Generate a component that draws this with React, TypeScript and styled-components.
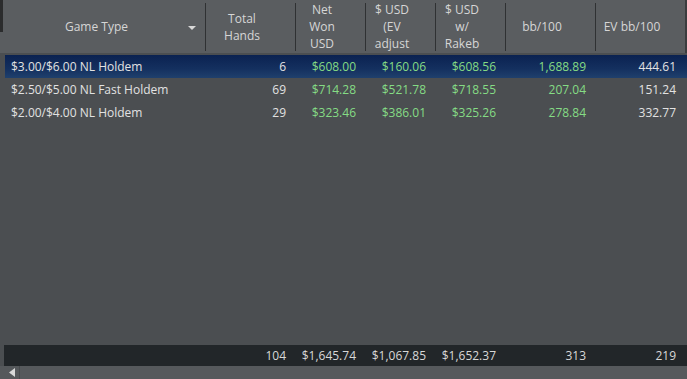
import * as React from "react";
import styled, { createGlobalStyle } from "styled-components";

const GlobalStyle = createGlobalStyle`
	html, body {
		margin: 0;
		padding: 0;
		background: #4b4e51;
	}
	body {
		font-family: "Open Sans", "Noto Sans", sans-serif;
		font-size: 12px;
	}
`;

const COLS = "5px 201px 90px 70px 70px 70px 90px 90px";

interface Stat {
	game: string;
	hands: string;
	net: string;
	ev: string;
	rake: string;
	bb: string;
	evbb: string;
}

const rows: Stat[] = [
	{ game: "$3.00/$6.00 NL Holdem", hands: "6", net: "$608.00", ev: "$160.06", rake: "$608.56", bb: "1,688.89", evbb: "444.61" },
	{ game: "$2.50/$5.00 NL Fast Holdem", hands: "69", net: "$714.28", ev: "$521.78", rake: "$718.55", bb: "207.04", evbb: "151.24" },
	{ game: "$2.00/$4.00 NL Holdem", hands: "29", net: "$323.46", ev: "$386.01", rake: "$325.26", bb: "278.84", evbb: "332.77" },
];

const headers = [
	["Game Type"],
	["Total", "Hands"],
	["Net", "Won", "USD"],
	["$ USD", "(EV", "adjust"],
	["$ USD", "w/", "Rakeb"],
	["bb/100"],
	["EV bb/100"],
];

const Frame = styled.div`
	width: 687px;
	height: 379px;
	display: flex;
	flex-direction: column;
	background: #4b4e51;
	overflow: hidden;
	color: #e2e2e2;
`;

const Header = styled.div`
	height: 53px;
	flex: none;
	display: grid;
	grid-template-columns: ${COLS} 1fr;
	background: #5a5d60;
	border-right: 2px solid #3a3c3e;
	box-sizing: border-box;
`;

const Gutter = styled.div`
	display: flex;
	align-items: flex-start;
`;

const GutterMark = styled.div`
	width: 3px;
	height: 32px;
	background: #2b2c2d;
`;

const HeadCell = styled.div<{ $last?: boolean }>`
	position: relative;
	display: flex;
	align-items: center;
	justify-content: center;
	padding-right: 18px;

	&::after {
		content: "";
		display: ${(p) => (p.$last ? "none" : "block")};
		position: absolute;
		right: 0;
		top: 3px;
		bottom: 2px;
		width: 1px;
		background: #2f3133;
	}
`;

const HeadText = styled.div`
	color: #d6d6d6;
	line-height: 17px;
	text-align: center;
	white-space: nowrap;
`;

const SortArrow = styled.div`
	position: absolute;
	right: 10px;
	top: 26px;
	width: 0;
	height: 0;
	border-left: 4px solid transparent;
	border-right: 4px solid transparent;
	border-top: 4px solid #d8d8d8;
`;

const Body = styled.div`
	flex: 1;
	padding-top: 2px;
	display: flex;
	flex-direction: column;
`;

const Row = styled.div<{ $selected?: boolean }>`
	height: 23px;
	display: grid;
	grid-template-columns: ${COLS};
	align-items: center;
	background: ${(p) =>
		p.$selected ? "linear-gradient(to bottom, #0b2251 0%, #14305f 60%, #1f406d 100%)" : "transparent"};
`;

const RowGap = styled.span`
	align-self: stretch;
	background: #4b4e51;
`;

const Cell = styled.div<{ $left?: boolean; $green?: boolean }>`
	padding: ${(p) => (p.$left ? "0 0 0 6px" : "0 10px 0 0")};
	text-align: ${(p) => (p.$left ? "left" : "right")};
	color: ${(p) => (p.$green ? "#85dc85" : "inherit")};
	white-space: nowrap;
	overflow: hidden;
`;

const Footer = styled.div`
	height: 21px;
	flex: none;
	display: grid;
	grid-template-columns: 4px 202px 90px 70px 70px 70px 90px 90px;
	align-items: center;
	background: #222629;
	color: #d8d8d8;
`;

const Scrollbar = styled.div`
	height: 13px;
	flex: none;
	display: flex;
	background: #55585b;
	padding-left: 4px;
`;

const ScrollButton = styled.div`
	width: 15px;
	display: flex;
	align-items: center;
	justify-content: center;
	border-right: 1px solid #484b4e;
`;

const ScrollTrack = styled.div`
	flex: 1;
	background: #56595c;
`;

export default function App(): JSX.Element {
	return (
		<Frame>
			<GlobalStyle />
			<Header>
				<Gutter>
					<GutterMark />
				</Gutter>
				{headers.map((lines, i) => (
					<HeadCell key={i} $last={i === headers.length - 1}>
						<HeadText>
							{lines.map((l) => (
								<div key={l}>{l}</div>
							))}
						</HeadText>
						{i === 0 && <SortArrow />}
					</HeadCell>
				))}
			</Header>

			<Body>
				{rows.map((r, i) => (
					<Row key={r.game} $selected={i === 0}>
						<RowGap />
						<Cell $left>{r.game}</Cell>
						<Cell>{r.hands}</Cell>
						<Cell $green>{r.net}</Cell>
						<Cell $green>{r.ev}</Cell>
						<Cell $green>{r.rake}</Cell>
						<Cell $green>{r.bb}</Cell>
						<Cell>{r.evbb}</Cell>
					</Row>
				))}
			</Body>

			<Footer>
				<RowGap />
				<span />
				<Cell>104</Cell>
				<Cell>$1,645.74</Cell>
				<Cell>$1,067.85</Cell>
				<Cell>$1,652.37</Cell>
				<Cell>313</Cell>
				<Cell>219</Cell>
			</Footer>

			<Scrollbar>
				<ScrollButton>
					<svg width="6" height="9" viewBox="0 0 6 9">
						<path d="M6 0 L0 4.5 L6 9 Z" fill="#d8d8d8" />
					</svg>
				</ScrollButton>
				<ScrollTrack />
			</Scrollbar>
		</Frame>
	);
}
